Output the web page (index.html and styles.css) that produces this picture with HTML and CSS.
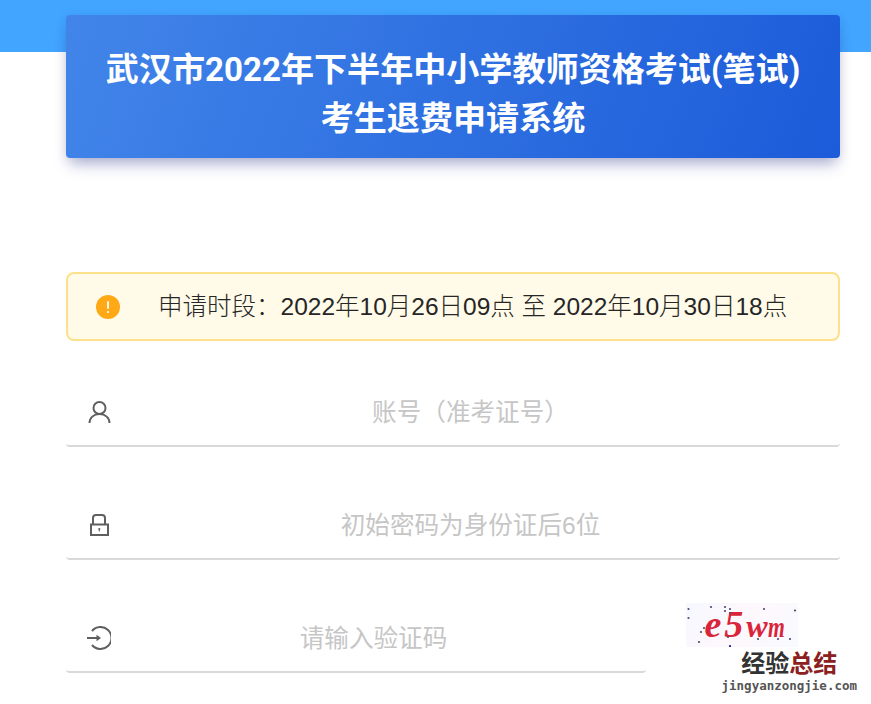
FILE: index.html
```html
<!DOCTYPE html>
<html lang="zh-CN">

<head>
    <meta charset="UTF-8">
    <meta name="viewport" content="width=device-width, initial-scale=1.0">
    <title>考生退费申请系统</title>
    <link rel="stylesheet" href="styles.css">
</head>

<body>
    <div class="top-band"></div>
    <div class="container">
        <div class="title-card">
            <h1>武汉市2022年下半年中小学教师资格考试(笔试)<br>考生退费申请系统</h1>
        </div>

        <div class="notice">
            <svg class="notice-icon" viewBox="0 0 24 24" width="24" height="24">
                <circle cx="12" cy="12" r="12" fill="#ffa916"></circle>
                <rect x="11.100" y="6" width="1.800" height="8" rx="0.900" fill="#fff"></rect>
                <circle cx="12" cy="17" r="1.100" fill="#fff"></circle>
            </svg>
            <span class="notice-text">申请时段：2022年10月26日09点 至 2022年10月30日18点</span>
        </div>

        <form class="login-form">
            <div class="form-row">
                <svg class="row-icon" viewBox="0 0 24 24" width="24" height="24">
                    <circle cx="12.500" cy="8" r="6"></circle>
                    <path d="M2.500 23c0-5 4-9 10-9s10 4 10 9"></path>
                </svg>
                <input class="row-input" type="text" placeholder="账号（准考证号）">
            </div>
            <div class="form-row">
                <svg class="row-icon" viewBox="0 0 24 24" width="24" height="24">
                    <path d="M6 11.500V5Q6 2 9 2h6q3 0 3 3v6.500"></path>
                    <rect x="4" y="11.500" width="17" height="10.500"></rect>
                    <circle class="icon-dot" cx="12.300" cy="16" r="1.100"></circle>
                    <path class="icon-thin" d="M12.300 16v2.500"></path>
                </svg>
                <input class="row-input" type="text" placeholder="初始密码为身份证后6位">
            </div>
            <div class="captcha-line">
                <div class="form-row captcha-row">
                    <svg class="row-icon" viewBox="0 0 24 24" width="24" height="24">
                        <path d="M5 5A11 11 0 1 1 5 19"></path>
                        <path d="M0 12h12.500"></path>
                        <path class="icon-head" d="M9.500 8.800l4.500 3.200-4.500 3.200z"></path>
                    </svg>
                    <input class="row-input" type="text" placeholder="请输入验证码">
                </div>
                <div class="captcha">
                    <svg class="captcha-dots" viewBox="0 0 112 44" width="112" height="44">
                        <circle cx="2.500" cy="6" r="1.100"></circle>
                        <circle cx="25" cy="4" r="1.100"></circle>
                        <circle cx="39" cy="4" r="1.100"></circle>
                        <circle cx="44" cy="6" r="1.100"></circle>
                        <circle cx="44" cy="10" r="1.100"></circle>
                        <circle cx="39" cy="8" r="1.100"></circle>
                        <circle cx="78" cy="6" r="1.100"></circle>
                        <circle cx="109" cy="7.500" r="1.100"></circle>
                        <circle cx="2.500" cy="15" r="1.100"></circle>
                        <circle cx="18" cy="25" r="1.100"></circle>
                        <circle cx="15" cy="29" r="1.100"></circle>
                        <circle cx="13" cy="39" r="1.100"></circle>
                        <circle cx="42" cy="34" r="1.100"></circle>
                        <circle cx="72" cy="36" r="1.100"></circle>
                        <circle cx="92" cy="36" r="1.100"></circle>
                        <circle cx="104" cy="36" r="1.100"></circle>
                        <circle cx="44" cy="43" r="1.100" fill="#1c1c9c"></circle>
                    </svg>
                    <span class="captcha-text">e5<span class="captcha-w">w</span><span class="captcha-m">m</span></span>
                </div>
            </div>
        </form>
    </div>

    <div class="watermark">
        <div class="watermark-cn">经验<span class="watermark-red">总结</span></div>
        <div class="watermark-en">jingyanzongjie.com</div>
    </div>
</body>

</html>
```

FILE: styles.css
```css
html,
body {
    margin: 0;
    height: 704px;
    overflow: hidden;
    background: #fff;
}

body {
    position: relative;
    font-family: "Liberation Sans", Roboto, "Noto Sans CJK SC", sans-serif;
}

.top-band {
    height: 52px;
    background-color: #42a5ff;
}

.container {
    margin: -37px 31px 0 66px;
}

.title-card {
    height: 129px;
    padding-top: 14px;
    display: flex;
    align-items: center;
    justify-content: center;
    border-radius: 4px;
    background: linear-gradient(110deg, #4285e9, #1c5bd9);
    box-shadow: 0 10px 14px -4px rgba(40, 50, 150, 0.35), 0 2px 12px rgba(0, 0, 0, 0.08);
}

h1 {
    margin: 0;
    font-family: Roboto, "Noto Sans CJK SC", sans-serif;
    font-size: 33.100px;
    font-weight: 700;
    line-height: 49px;
    text-align: center;
    color: #fff;
}

.notice {
    height: 65px;
    margin-top: 114px;
    display: flex;
    align-items: center;
    border: 2px solid #fde08c;
    border-radius: 8px;
    background-color: #fffbe8;
}

.notice-icon {
    margin-left: 28px;
    flex-shrink: 0;
}

.notice-text {
    margin: -4px 0 0 38px;
    font-size: 24.500px;
    font-weight: 300;
    color: #262626;
    white-space: nowrap;
}

.login-form {
    margin-top: 34px;
}

.form-row {
    height: 66px;
    padding: 4px 0 0 21px;
    margin-bottom: 41px;
    display: flex;
    align-items: center;
    border-bottom: 2px solid #d9d9d9;
    border-radius: 0 0 4px 4px;
}

.row-icon {
    flex-shrink: 0;
    fill: none;
    stroke: #5f5f5f;
    stroke-width: 2;
}

.row-icon .icon-dot,
.row-icon .icon-head {
    fill: #5f5f5f;
    stroke: none;
}

.row-icon .icon-thin {
    stroke-width: 1;
}

.row-input {
    flex: 1;
    min-width: 0;
    height: 40px;
    padding: 2px 10px 0 0;
    border: none;
    outline: none;
    background: transparent;
    font-family: inherit;
    font-size: 24.600px;
    text-align: center;
    color: #333;
}

.row-input::placeholder {
    color: #c6c6c6;
    opacity: 1;
}

.captcha-line {
    display: flex;
    align-items: flex-start;
}

.captcha-row {
    width: 559px;
    flex-shrink: 0;
    margin-bottom: 0;
}

.captcha {
    position: relative;
    width: 112px;
    height: 44px;
    margin: 2px 0 0 40px;
    display: flex;
    align-items: center;
    justify-content: center;
    background: linear-gradient(120deg, #f6f8ff, #fef8fc 50%, #f8faff);
}

.captcha-dots {
    position: absolute;
    left: 0;
    top: 0;
    fill: #4a4a78;
}

.captcha-text {
    margin-left: 8px;
    font-family: "Liberation Serif", serif;
    font-size: 38px;
    font-style: italic;
    font-weight: 700;
    line-height: 44px;
    letter-spacing: 3px;
    color: #d9243a;
}

.captcha-w {
    font-size: 32px;
    letter-spacing: 0;
}

.captcha-m {
    display: inline-block;
    width: 20px;
    font-size: 30px;
    letter-spacing: 0;
    transform: scaleX(0.72);
    transform-origin: left;
}

.watermark {
    position: absolute;
    right: 14px;
    bottom: 11px;
    text-align: center;
    font-family: "Liberation Sans", "Noto Sans CJK SC", sans-serif;
}

.watermark-cn {
    font-size: 24px;
    font-weight: 700;
    line-height: 28px;
    color: #333;
}

.watermark-red {
    color: #8c2020;
}

.watermark-en {
    font-family: "DejaVu Sans Mono", monospace;
    font-size: 12.500px;
    font-weight: 700;
    line-height: 15px;
    color: #555;
}
```
